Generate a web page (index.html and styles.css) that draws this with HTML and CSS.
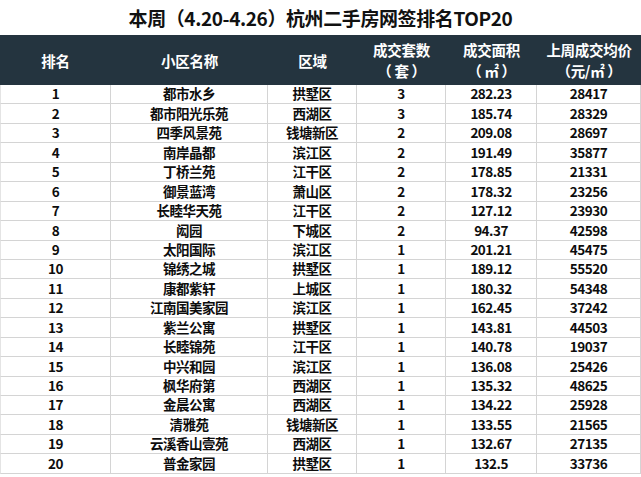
FILE: index.html
```html
<!DOCTYPE html>
<html lang="zh">
<head>
<meta charset="utf-8">
<link rel="stylesheet" href="styles.css">
</head>
<body>
<div class="page">
  <h1 class="title">本周（4.20-4.26）杭州二手房网签排名TOP20</h1>
  <div class="grid">
    <div class="th">排名</div>
    <div class="th">小区名称</div>
    <div class="th">区域</div>
    <div class="th">成交套数<br>（ 套 ）</div>
    <div class="th">成交面积<br>（ ㎡ ）</div>
    <div class="th">上周成交均价<br>（元/㎡ ）</div>

    <div class="td">1</div><div class="td">都市水乡</div><div class="td">拱墅区</div><div class="td">3</div><div class="td">282.23</div><div class="td">28417</div>
    <div class="td">2</div><div class="td">都市阳光乐苑</div><div class="td">西湖区</div><div class="td">3</div><div class="td">185.74</div><div class="td">28329</div>
    <div class="td">3</div><div class="td">四季风景苑</div><div class="td">钱塘新区</div><div class="td">2</div><div class="td">209.08</div><div class="td">28697</div>
    <div class="td">4</div><div class="td">南岸晶都</div><div class="td">滨江区</div><div class="td">2</div><div class="td">191.49</div><div class="td">35877</div>
    <div class="td">5</div><div class="td">丁桥兰苑</div><div class="td">江干区</div><div class="td">2</div><div class="td">178.85</div><div class="td">21331</div>
    <div class="td">6</div><div class="td">御景蓝湾</div><div class="td">萧山区</div><div class="td">2</div><div class="td">178.32</div><div class="td">23256</div>
    <div class="td">7</div><div class="td">长睦华天苑</div><div class="td">江干区</div><div class="td">2</div><div class="td">127.12</div><div class="td">23930</div>
    <div class="td">8</div><div class="td">闳园</div><div class="td">下城区</div><div class="td">2</div><div class="td">94.37</div><div class="td">42598</div>
    <div class="td">9</div><div class="td">太阳国际</div><div class="td">滨江区</div><div class="td">1</div><div class="td">201.21</div><div class="td">45475</div>
    <div class="td">10</div><div class="td">锦绣之城</div><div class="td">拱墅区</div><div class="td">1</div><div class="td">189.12</div><div class="td">55520</div>
    <div class="td">11</div><div class="td">康都紫轩</div><div class="td">上城区</div><div class="td">1</div><div class="td">180.32</div><div class="td">54348</div>
    <div class="td">12</div><div class="td">江南国美家园</div><div class="td">滨江区</div><div class="td">1</div><div class="td">162.45</div><div class="td">37242</div>
    <div class="td">13</div><div class="td">紫兰公寓</div><div class="td">拱墅区</div><div class="td">1</div><div class="td">143.81</div><div class="td">44503</div>
    <div class="td">14</div><div class="td">长睦锦苑</div><div class="td">江干区</div><div class="td">1</div><div class="td">140.78</div><div class="td">19037</div>
    <div class="td">15</div><div class="td">中兴和园</div><div class="td">滨江区</div><div class="td">1</div><div class="td">136.08</div><div class="td">25426</div>
    <div class="td">16</div><div class="td">枫华府第</div><div class="td">西湖区</div><div class="td">1</div><div class="td">135.32</div><div class="td">48625</div>
    <div class="td">17</div><div class="td">金晨公寓</div><div class="td">西湖区</div><div class="td">1</div><div class="td">134.22</div><div class="td">25928</div>
    <div class="td">18</div><div class="td">清雅苑</div><div class="td">钱塘新区</div><div class="td">1</div><div class="td">133.55</div><div class="td">21565</div>
    <div class="td">19</div><div class="td">云溪香山壹苑</div><div class="td">西湖区</div><div class="td">1</div><div class="td">132.67</div><div class="td">27135</div>
    <div class="td">20</div><div class="td">普金家园</div><div class="td">拱墅区</div><div class="td">1</div><div class="td">132.5</div><div class="td">33736</div>
  </div>
</div>
</body>
</html>
```
FILE: styles.css
```css
html, body {
  margin: 0;
  padding: 0;
  background: #ffffff;
}
.page {
  width: 641px;
  font-family: "Noto Sans CJK SC", "Noto Sans", sans-serif;
  color: #111111;
}
.title {
  margin: 0;
  height: 35px;
  line-height: 35px;
  text-align: center;
  font-size: 19px;
  font-weight: 700;
  letter-spacing: -0.4px;
  color: #111111;
}
.grid {
  display: grid;
  grid-template-columns: 111px 157px 89px 89px 91px 104px;
  grid-template-rows: 50px repeat(20, 19.45px);
}
.th {
  background: #24343f;
  color: #ffffff;
  font-size: 14.5px;
  font-weight: 700;
  line-height: 21px;
  display: flex;
  align-items: center;
  justify-content: center;
  text-align: center;
  letter-spacing: -0.3px;
}
.td {
  box-sizing: border-box;
  border-right: 1px solid #d4d4d4;
  border-bottom: 1px solid #d4d4d4;
  font-size: 13.5px;
  font-weight: 700;
  display: flex;
  align-items: center;
  justify-content: center;
  letter-spacing: -0.5px;
  line-height: 1;
  color: #0d0d0d;
}
.td:nth-child(6n+1) {
  border-left: 1px solid #e4e4e4;
}
```
